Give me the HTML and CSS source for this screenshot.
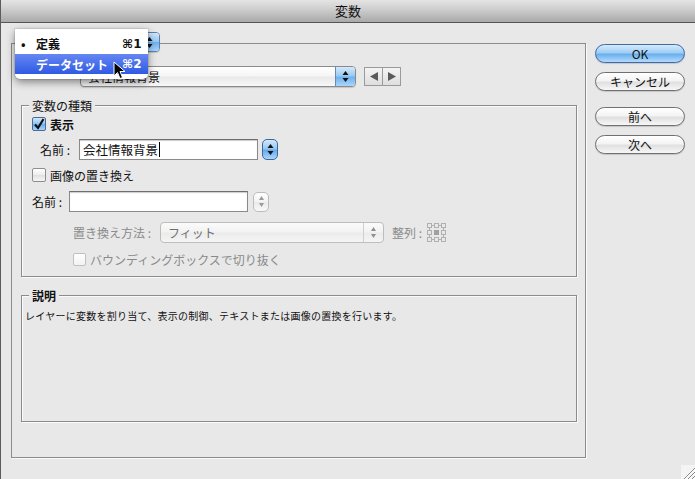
FILE: index.html
```html
<!DOCTYPE html>
<html>
<head>
    <meta charset="UTF-8">
    <title>変数</title>
    <link rel="stylesheet" href="styles.css">
</head>
<body>
    <div class="window">
        <div class="titlebar">変数</div>
        <div class="content">
            <div class="main-box">
                <div class="popup mode-popup">
                    <span class="popup-text">定義</span>
                    <span class="popup-arrows blue">
                        <svg width="7" height="11" viewBox="0 0 7 11"><path d="M3.5 0 L6.5 4 L0.5 4 Z M3.5 11 L6.5 7 L0.5 7 Z" fill="#111"/></svg>
                    </span>
                </div>
                <div class="layer-row">
                    <span class="layer-label">レイヤー：</span>
                    <div class="popup layer-popup">
                        <span class="popup-text">会社情報背景</span>
                        <span class="popup-arrows blue">
                            <svg width="7" height="11" viewBox="0 0 7 11"><path d="M3.5 0 L6.5 4 L0.5 4 Z M3.5 11 L6.5 7 L0.5 7 Z" fill="#111"/></svg>
                        </span>
                    </div>
                    <div class="nav-buttons">
                        <span class="nav-btn"><svg width="8" height="9" viewBox="0 0 8 9"><path d="M0 4.5 L8 0 L8 9 Z" fill="#5a5a5a"/></svg></span>
                        <span class="nav-btn"><svg width="8" height="9" viewBox="0 0 8 9"><path d="M8 4.5 L0 0 L0 9 Z" fill="#5a5a5a"/></svg></span>
                    </div>
                </div>

                <div class="group type-group">
                    <div class="group-title">変数の種類</div>
                    <div class="row row-show">
                        <span class="checkbox checked">
                            <svg width="12" height="12" viewBox="0 0 12 12"><path d="M2 6.5 L5 10 L10.5 1" fill="none" stroke="#111" stroke-width="2.2"/></svg>
                        </span>
                        <span class="bold">表示</span>
                    </div>
                    <div class="row row-name1">
                        <span class="field-label name1-label">名前 :</span>
                        <span class="textfield">会社情報背景<span class="caret"></span></span>
                        <span class="stepper blue">
                            <svg width="7" height="11" viewBox="0 0 7 11"><path d="M3.5 0 L6.5 4 L0.5 4 Z M3.5 11 L6.5 7 L0.5 7 Z" fill="#111"/></svg>
                        </span>
                    </div>
                    <div class="row row-replace">
                        <span class="checkbox"></span>
                        <span>画像の置き換え</span>
                    </div>
                    <div class="row row-name2">
                        <span class="field-label name2-label">名前 :</span>
                        <span class="textfield"></span>
                        <span class="stepper grey">
                            <svg width="7" height="11" viewBox="0 0 7 11"><path d="M3.5 0 L6 4 L1 4 Z M3.5 11 L6 7 L1 7 Z" fill="#9a9a9a"/></svg>
                        </span>
                    </div>
                    <div class="row row-method disabled">
                        <span class="field-label method-label">置き換え方法 :</span>
                        <div class="popup method-popup">
                            <span class="popup-text">フィット</span>
                            <span class="popup-arrows grey">
                                <svg width="7" height="11" viewBox="0 0 7 11"><path d="M3.5 0 L6 4 L1 4 Z M3.5 11 L6 7 L1 7 Z" fill="#8f8f8f"/></svg>
                            </span>
                        </div>
                        <span class="align-label">整列 :</span>
                        <svg class="align-icon" width="19" height="19" viewBox="0 0 19 19">
                            <g fill="none" stroke="#b0b0b0" stroke-width="1">
                                <rect x="0.5" y="0.5" width="4" height="4"/>
                                <rect x="7.5" y="0.5" width="4" height="4"/>
                                <rect x="14.5" y="0.5" width="4" height="4"/>
                                <rect x="0.5" y="7.5" width="4" height="4"/>
                                <rect x="14.5" y="7.5" width="4" height="4"/>
                                <rect x="0.5" y="14.5" width="4" height="4"/>
                                <rect x="7.5" y="14.5" width="4" height="4"/>
                                <rect x="14.5" y="14.5" width="4" height="4"/>
                                <path d="M4.5 2.5 H7.5 M11.5 2.5 H14.5 M4.5 16.5 H7.5 M11.5 16.5 H14.5 M2.5 4.5 V7.5 M2.5 11.5 V14.5 M16.5 4.5 V7.5 M16.5 11.5 V14.5"/>
                            </g>
                            <rect x="7" y="7" width="5" height="5" fill="#a0a0a0"/>
                        </svg>
                    </div>
                    <div class="row row-crop disabled">
                        <span class="checkbox small"></span>
                        <span>バウンディングボックスで切り抜く</span>
                    </div>
                </div>

                <div class="group desc-group">
                    <div class="group-title bold">説明</div>
                    <p class="desc">レイヤーに変数を割り当て、表示の制御、テキストまたは画像の置換を行います。</p>
                </div>
            </div>

            <div class="buttons">
                <button class="aqua default">OK</button>
                <button class="aqua cancel">キャンセル</button>
                <button class="aqua prev">前へ</button>
                <button class="aqua next">次へ</button>
            </div>
        </div>
        <div class="footer">
            <svg class="grip" width="14" height="14" viewBox="0 0 14 14">
                <rect width="14" height="14" fill="#f4f4f4"/>
                <path d="M3 14 L14 3 M7 14 L14 7 M11 14 L14 11" stroke="#8a8a8a" stroke-width="1"/>
                <path d="M4 14 L14 4 M8 14 L14 8 M12 14 L14 12" stroke="#fff" stroke-width="1"/>
            </svg>
        </div>

        <div class="menu">
            <div class="menu-item">
                <span class="menu-check">•</span>
                <span class="menu-text">定義</span>
                <span class="menu-key">⌘1</span>
            </div>
            <div class="menu-item selected">
                <span class="menu-check"></span>
                <span class="menu-text">データセット</span>
                <span class="menu-key">⌘2</span>
            </div>
        </div>
        <svg class="cursor" width="13" height="19" viewBox="0 0 13 19">
            <path d="M1 1 L1 15 L4.5 11.5 L7 17.5 L9.5 16.5 L7 10.5 L12 10.5 Z" fill="#000" stroke="#fff" stroke-width="1"/>
        </svg>
    </div>
</body>
</html>
```

FILE: styles.css
```css
body {
    margin: 0;
    background: #e8e8e8;
    font-family: "Noto Sans CJK JP", "DejaVu Sans", sans-serif;
    font-size: 12px;
    color: #111;
}

.window {
    position: relative;
    width: 695px;
    height: 479px;
    box-sizing: border-box;
    border-left: 1px solid #5c5c5c;
    background: #e8e8e8;
    overflow: hidden;
    display: flex;
    flex-direction: column;
}

.titlebar {
    height: 22px;
    line-height: 22px;
    text-align: center;
    font-size: 13px;
    background: linear-gradient(#e4e4e4, #cfcfcf 40%, #a9a9a9);
    border-bottom: 1px solid #555;
}

.content {
    flex: 1;
    display: flex;
    padding: 20px 0 0 10px;
}

.bold {
    font-weight: bold;
}

/* main frame */
.main-box {
    width: 575px;
    height: 415px;
    box-sizing: border-box;
    border: 1px solid #8c8c8c;
    box-shadow: 1px 1px 0 #fafafa;
}

/* popup buttons */
.popup {
    display: flex;
    height: 21px;
    box-sizing: border-box;
    border: 1px solid #8a8a8a;
    border-radius: 4px;
    overflow: hidden;
    background: linear-gradient(#ffffff, #f5f5f5 48%, #e8e8e8 52%, #f8f8f8);
    box-shadow: 0 1px 1px rgba(0, 0, 0, 0.15);
}

.popup-text {
    flex: 1;
    padding-left: 7px;
    line-height: 19px;
    white-space: nowrap;
}

.popup-arrows {
    width: 19px;
    display: flex;
    align-items: center;
    justify-content: center;
}

.popup-arrows.blue {
    border-left: 1px solid #6d88ac;
    background: linear-gradient(#d3e8fb, #98c9f3 48%, #6db0ee 52%, #a9d6fc);
}

.popup-arrows.grey {
    border-left: 1px solid #cfcfcf;
}

.mode-popup {
    width: 136px;
    height: 20px;
    margin: -12px 0 0 12px;
    border-color: #5e7fae;
}

.layer-row {
    display: flex;
    align-items: flex-start;
    height: 21px;
    margin-top: 14px;
    padding-left: 6px;
}

.layer-label {
    width: 62px;
    line-height: 16px;
}

.layer-popup {
    width: 276px;
}

.nav-buttons {
    display: flex;
    margin: 1px 0 0 8px;
    border: 1px solid #9a9a9a;
    background: linear-gradient(#f4f4f4, #dedede);
}

.nav-btn {
    width: 17px;
    height: 17px;
    display: flex;
    align-items: center;
    justify-content: center;
}

.nav-btn + .nav-btn {
    border-left: 1px solid #9a9a9a;
}

/* group boxes */
.group {
    border: 1px solid #8c8c8c;
    box-shadow: 1px 1px 0 #fafafa, inset 1px 1px 0 #fafafa;
}

.group-title {
    width: fit-content;
    margin: -8px 0 0 7px;
    padding: 0 3px;
    line-height: 15px;
    background: #e8e8e8;
}

.type-group {
    margin: 18px 8px 0 9px;
    padding-bottom: 10px;
}

.row {
    display: flex;
    align-items: center;
}

.row-show {
    height: 14px;
    margin-top: 4px;
    padding-left: 10px;
    gap: 4px;
}

.row-name1 {
    height: 21px;
    margin-top: 8px;
    padding-left: 18px;
}

.row-replace {
    height: 14px;
    margin-top: 8px;
    padding-left: 10px;
    gap: 4px;
}

.row-name2 {
    height: 21px;
    margin-top: 9px;
    padding-left: 10px;
}

.row-method {
    height: 21px;
    margin-top: 10px;
    padding-left: 51px;
}

.row-crop {
    height: 13px;
    margin-top: 10px;
    padding-left: 51px;
    gap: 4px;
}

.disabled {
    color: #8a8a8a;
}

.name1-label {
    width: 39px;
}

.name2-label {
    width: 37px;
}

.method-label {
    width: 87px;
}

.checkbox {
    width: 14px;
    height: 14px;
    box-sizing: border-box;
    border: 1px solid #8e8e8e;
    border-radius: 2px;
    background: linear-gradient(#ffffff, #ececec 50%, #e0e0e0 50%, #f6f6f6);
    display: flex;
    align-items: center;
    justify-content: center;
}

.checkbox.checked {
    border-color: #4a6a94;
    background: linear-gradient(#d0e6fa, #8fc3f1 50%, #64aaeb 50%, #a8d4fb);
}

.checkbox.small {
    width: 13px;
    height: 13px;
    border-color: #c0c0c0;
    background: linear-gradient(#ffffff, #f2f2f2);
}

.textfield {
    width: 179px;
    height: 21px;
    box-sizing: border-box;
    border: 1px solid #8a8a8a;
    border-top-color: #6e6e6e;
    box-shadow: inset 0 1px 1px rgba(0, 0, 0, 0.2);
    background: #fff;
    padding-left: 3px;
    line-height: 19px;
    font-size: 12.5px;
    display: flex;
    align-items: center;
}

.caret {
    width: 1px;
    height: 15px;
    background: #000;
    margin-left: 1px;
}

.stepper {
    width: 16px;
    height: 21px;
    box-sizing: border-box;
    border-radius: 5px;
    display: flex;
    align-items: center;
    justify-content: center;
}

.stepper.blue {
    margin-left: 4px;
    border: 1px solid #3f6797;
    background: linear-gradient(#d3e8fb, #93c6f2 48%, #62a9ec 52%, #a9d6fc);
}

.stepper.grey {
    margin-left: 5px;
    height: 20px;
    border: 1px solid #bcbcbc;
    background: linear-gradient(#ffffff, #f2f2f2 50%, #eaeaea 50%, #f8f8f8);
}

.method-popup {
    width: 224px;
    border-color: #bdbdbd;
    background: linear-gradient(#fbfbfb, #f2f2f2 48%, #ebebeb 52%, #f5f5f5);
    box-shadow: none;
    color: #6e6e6e;
}

.align-label {
    margin-left: 8px;
}

.align-icon {
    margin-left: 5px;
}

.desc-group {
    height: 127px;
    box-sizing: border-box;
    margin: 18px 8px 0 9px;
}

.desc {
    margin: 6px 0 0 3px;
    font-size: 10px;
    line-height: 14px;
    letter-spacing: 0.25px;
}

/* right column */
.buttons {
    display: flex;
    flex-direction: column;
    width: 90px;
    margin: 1px 0 0 9px;
}

.aqua {
    height: 19px;
    padding: 0;
    border: 1px solid #707070;
    border-radius: 10px;
    font-family: inherit;
    font-size: 12px;
    line-height: 17px;
    color: #111;
    background: linear-gradient(#ffffff, #f4f4f4 45%, #e0e0e0 55%, #f7f7f7);
    box-shadow: 0 1px 1px rgba(0, 0, 0, 0.15);
}

.aqua.default {
    border-color: #3f6aa3;
    background: linear-gradient(#d6ebfc, #9fcdf4 45%, #6aafee 55%, #b3dbfc);
}

.aqua.cancel {
    margin-top: 9px;
}

.aqua.prev {
    margin-top: 16px;
}

.aqua.next {
    margin-top: 9px;
}

.footer {
    display: flex;
    justify-content: flex-end;
    height: 14px;
}

/* open popup menu */
.menu {
    position: absolute;
    left: 14px;
    top: 29px;
    width: 133px;
    padding: 4px 0 5px;
    background: #fff;
    border-radius: 0 0 5px 5px;
    box-shadow: 0 3px 9px rgba(0, 0, 0, 0.45), 0 0 0 1px rgba(0, 0, 0, 0.08);
}

.menu-item {
    display: flex;
    align-items: center;
    height: 21px;
    font-weight: bold;
    font-size: 12px;
}

.menu-item.selected {
    height: 20px;
    color: #fff;
    background: linear-gradient(#6586f2, #2f5ae4);
}

.menu-check {
    width: 15px;
    padding-left: 6px;
}

.menu-text {
    flex: 1;
}

.menu-key {
    width: 26px;
    font-family: "DejaVu Sans", sans-serif;
    font-size: 12px;
}

.cursor {
    position: absolute;
    left: 112px;
    top: 61px;
}
```
